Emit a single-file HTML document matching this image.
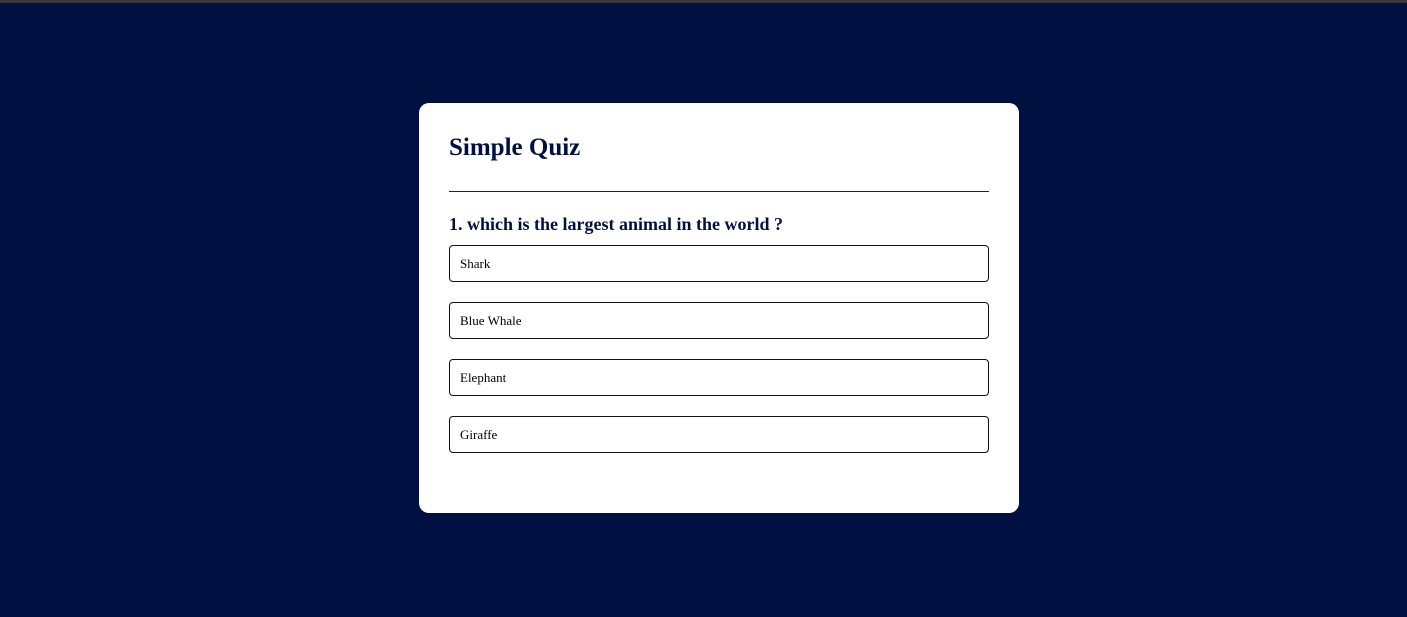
<!DOCTYPE html>
<html><head><style>
html,body{margin:0;padding:0;}
body{width:1407px;height:617px;background:#001040;position:relative;overflow:hidden;font-family:"Liberation Serif",serif;}
.top{position:absolute;left:0;top:0;width:1407px;height:3px;background:#3a3a3a;}
.card{position:absolute;left:419px;top:103px;width:600px;height:410px;background:#fff;border-radius:10px;}
h1{position:absolute;left:30px;top:31px;margin:0;font-size:25px;font-weight:bold;color:#001040;line-height:28px;}
.hr{position:absolute;left:30px;top:88px;width:540px;height:1px;background:#222;}
h2{position:absolute;left:30px;top:110px;margin:0;font-size:18px;font-weight:bold;color:#001040;line-height:22px;}
.btn{position:absolute;left:30px;width:538px;height:35px;border:1px solid #111;border-radius:4px;font-size:13px;line-height:35px;padding-left:10px;box-sizing:content-box;width:528px;color:#000;}
</style></head><body>
<div class="top"></div>
<div class="card">
<h1>Simple Quiz</h1>
<div class="hr"></div>
<h2>1. which is the largest animal in the world ?</h2>
<div class="btn" style="top:142px">Shark</div>
<div class="btn" style="top:199px">Blue Whale</div>
<div class="btn" style="top:256px">Elephant</div>
<div class="btn" style="top:313px">Giraffe</div>
</div>
</body></html>
